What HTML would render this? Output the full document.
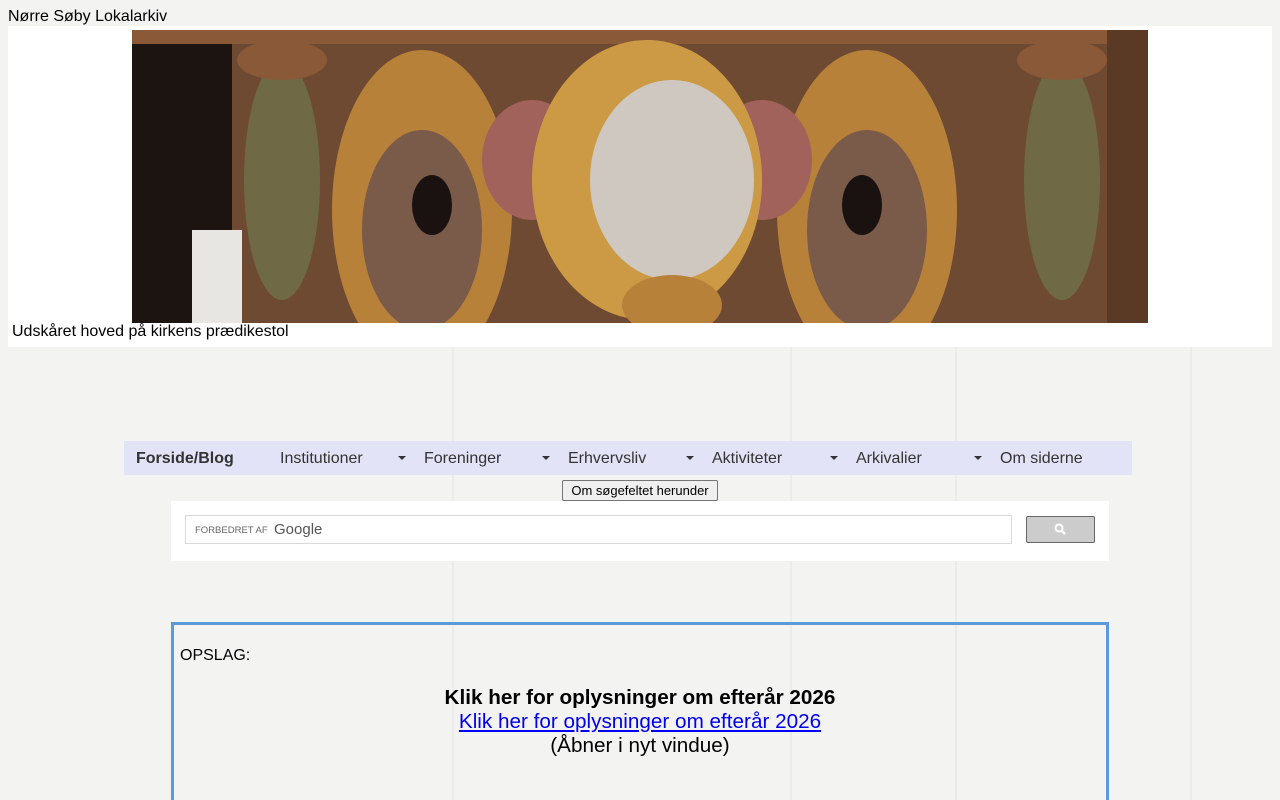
<!DOCTYPE html>
<html style="overflow:hidden"><head><meta charset="utf-8"><style>
body{margin:0;width:1280px;height:800px;overflow:hidden;background:#f3f3f2;font-family:"Liberation Sans",sans-serif;position:relative}
.a{position:absolute}
.line{position:absolute;top:347px;bottom:0;width:2px;background:#ebebe9}
.nav{left:124px;top:441px;width:1008px;height:34px;background:#e3e3f7;font-size:16px;color:#333}
.nav span{position:absolute;top:9px}
.tri{position:absolute;top:15px;width:0;height:0;border-left:4px solid transparent;border-right:4px solid transparent;border-top:4px solid #333}
</style></head><body>
<div class="line" style="left:452px"></div><div class="line" style="left:790px"></div><div class="line" style="left:955px"></div><div class="line" style="left:1190px"></div>
<div class="a" style="left:8px;top:8px;font-size:16px">Nørre Søby Lokalarkiv</div>
<div class="a" style="left:8px;top:26px;width:1264px;height:321px;background:#fff"></div>
<svg class="a" style="left:132px;top:30px" width="1016" height="293" viewBox="0 0 1016 293">
<rect width="1016" height="293" fill="#6e4a32"/>
<rect x="0" width="100" height="293" fill="#1c1410"/>
<rect x="0" y="0" width="1016" height="14" fill="#8a5a38"/>
<rect x="60" y="200" width="50" height="93" fill="#e8e6e2"/>
<ellipse cx="150" cy="150" rx="38" ry="120" fill="#6f6a45"/>
<ellipse cx="150" cy="30" rx="45" ry="20" fill="#8a5a38"/>
<ellipse cx="930" cy="150" rx="38" ry="120" fill="#6f6a45"/>
<ellipse cx="930" cy="30" rx="45" ry="20" fill="#8a5a38"/>
<rect x="975" width="41" height="293" fill="#5a3a24"/>
<ellipse cx="290" cy="180" rx="90" ry="160" fill="#b8813a"/>
<ellipse cx="290" cy="200" rx="60" ry="100" fill="#7a5a48"/>
<ellipse cx="300" cy="175" rx="20" ry="30" fill="#1a1210"/>
<ellipse cx="735" cy="180" rx="90" ry="160" fill="#b8813a"/>
<ellipse cx="735" cy="200" rx="60" ry="100" fill="#7a5a48"/>
<ellipse cx="730" cy="175" rx="20" ry="30" fill="#1a1210"/>
<ellipse cx="400" cy="130" rx="50" ry="60" fill="#a0625a"/>
<ellipse cx="630" cy="130" rx="50" ry="60" fill="#a0625a"/>
<ellipse cx="515" cy="150" rx="115" ry="140" fill="#cc9a45"/>
<ellipse cx="540" cy="150" rx="82" ry="100" fill="#cfc8c0"/>
<ellipse cx="540" cy="275" rx="50" ry="30" fill="#b8813a"/>
</svg>
<div class="a" style="left:12px;top:323px;font-size:16px">Udskåret hoved på kirkens prædikestol</div>
<div class="a nav">
<span style="left:12px;font-weight:bold">Forside/Blog</span>
<span style="left:156px">Institutioner</span><i class="tri" style="left:274px"></i>
<span style="left:300px">Foreninger</span><i class="tri" style="left:418px"></i>
<span style="left:444px">Erhvervsliv</span><i class="tri" style="left:562px"></i>
<span style="left:588px">Aktiviteter</span><i class="tri" style="left:706px"></i>
<span style="left:732px">Arkivalier</span><i class="tri" style="left:850px"></i>
<span style="left:876px">Om siderne</span>
</div>
<div class="a" style="left:562px;top:480px;width:154px;height:19px;border:1px solid #767676;border-radius:2px;background:#efefef;font-size:13px;text-align:center;line-height:19px">Om søgefeltet herunder</div>
<div class="a" style="left:171px;top:501px;width:938px;height:60px;background:#fff"></div>
<div class="a" style="left:185px;top:515px;width:825px;height:27px;border:1px solid #d9d9d9;background:#fff">
<span class="a" style="left:9px;top:9px;font-size:9.5px;color:#666">FORBEDRET AF</span>
<span class="a" style="left:88px;top:5px;font-size:15px;color:#555">Google</span></div>
<div class="a" style="left:1026px;top:516px;width:67px;height:25px;border:1px solid #666;border-radius:2px;background:#ccc">
<svg class="a" style="left:27px;top:6px" width="13" height="13" viewBox="0 0 13 13"><circle cx="5" cy="5" r="3.5" stroke="#fff" stroke-width="2" fill="none"/><path d="M7.5 7.5L11 11" stroke="#fff" stroke-width="2.5"/></svg></div>
<div class="a" style="left:171px;top:622px;width:932px;height:200px;border:3px solid #5b9bd5"></div>
<div class="a" style="left:180px;top:647px;font-size:16px">OPSLAG:</div>
<div class="a" style="left:174px;top:686px;width:932px;text-align:center;font-size:20.7px;line-height:24px">
<b>Klik her for oplysninger om efterår 2026</b><br><span style="color:#00e;text-decoration:underline">Klik her for oplysninger om efterår 2026</span><br>(Åbner i nyt vindue)</div>
</body></html>
